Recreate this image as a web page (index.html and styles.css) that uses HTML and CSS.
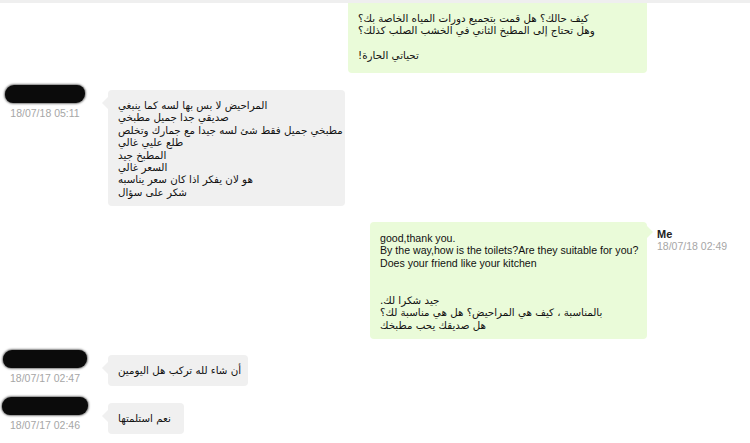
FILE: index.html
```html
<!DOCTYPE html>
<html lang="ar">
<head>
<meta charset="utf-8">
<link rel="stylesheet" href="styles.css">
</head>
<body>
<div class="strip"></div>
<div class="chat">
  <div class="row out first">
    <div class="bubble green b1">
      <div class="ar">كيف حالك؟ هل قمت بتجميع دورات المياه الخاصة بك؟</div>
      <div class="ar">وهل تحتاج إلى المطبخ الثاني في الخشب الصلب كذلك؟</div>
      <div class="blank"></div>
      <div class="ar">!تحياتي الحارة</div>
    </div>
    <div class="meta"></div>
  </div>

  <div class="row in r2">
    <div class="sender">
      <div class="blob w80"></div>
      <div class="time">18/07/18 05:11</div>
    </div>
    <div class="bubble grey tail-left b2">
      <div class="ar">المراحيض لا بس بها لسه كما ينبغي</div>
      <div class="ar">صديقي جدا جميل مطبخي</div>
      <div class="ar">مطبخي جميل فقط شئ لسه جيدا مع جمارك وتخلص</div>
      <div class="ar">طلع عليي غالي</div>
      <div class="ar">المطبخ جيد</div>
      <div class="ar">السعر غالي</div>
      <div class="ar">هو لان يفكر اذا كان سعر يناسبه</div>
      <div class="ar">شكر على سؤال</div>
    </div>
  </div>

  <div class="row out r3">
    <div class="bubble green tail-right b3">
      <div class="en">good,thank you.</div>
      <div class="en">By the way,how is the toilets?Are they suitable for you?</div>
      <div class="en">Does your friend like your kitchen</div>
      <div class="blank"></div>
      <div class="blank"></div>
      <div class="ar">.جيد شكرا لك</div>
      <div class="ar">بالمناسبة ، كيف هي المراحيض؟ هل هي مناسبة لك؟</div>
      <div class="ar">هل صديقك يحب مطبخك</div>
    </div>
    <div class="meta">
      <div class="me">Me</div>
      <div class="time">18/07/18 02:49</div>
    </div>
  </div>

  <div class="row in r4">
    <div class="sender">
      <div class="blob w84"></div>
      <div class="time">18/07/17 02:47</div>
    </div>
    <div class="bubble grey tail-left b4">
      <div class="ar">أن شاء لله تركب هل اليومين</div>
    </div>
  </div>

  <div class="row in r5">
    <div class="sender">
      <div class="blob w86"></div>
      <div class="time">18/07/17 02:46</div>
    </div>
    <div class="bubble grey tail-left b5">
      <div class="ar">نعم استلمتها</div>
    </div>
  </div>
</div>
</body>
</html>
```

FILE: styles.css
```css
* { box-sizing: border-box; }
html, body { margin: 0; padding: 0; background: #ffffff; }
body {
  width: 750px;
  height: 443px;
  overflow: hidden;
  font-family: "Liberation Sans", "DejaVu Sans", sans-serif;
  color: #1a1a1a;
  direction: ltr;
}
.strip { height: 3px; background: #efefef; }
.chat { display: flex; flex-direction: column; }
.row { display: flex; align-items: flex-start; }
.row.out { justify-content: flex-end; }
.r2 { margin-top: 12px; }
.r3 { margin-top: 16px; }
.r4 { margin-top: 11px; }
.r5 { margin-top: 11px; }

.bubble {
  position: relative;
  border-radius: 4px;
  padding: 9px 10px 8px 10px;
  line-height: 12.4px;
  white-space: nowrap;
}
.green { background: #eafbd9; }
.grey { background: #f0f0f0; }
.b1 { width: 299px; height: 70px; border-top-left-radius: 0; border-top-right-radius: 0; padding-top: 9px; }
.b2 { width: 237px; height: 116px; margin-top: 5px; }
.b3 { width: 277px; height: 117px; padding-top: 10px; }
.b4 { width: 140px; height: 31px; margin-top: 5px; padding-top: 9px; }
.b5 { width: 76px; height: 31px; margin-top: 6px; padding-top: 9px; }

.tail-left::before {
  content: "";
  position: absolute;
  left: -6px;
  top: 7px;
  border-style: solid;
  border-width: 6px 6px 6px 0;
  border-color: transparent #f0f0f0 transparent transparent;
}
.tail-right::after {
  content: "";
  position: absolute;
  right: -6px;
  top: 4px;
  border-style: solid;
  border-width: 6px 0 6px 6px;
  border-color: transparent transparent transparent #eafbd9;
}

.ar { font-family: "DejaVu Sans", sans-serif; font-size: 10.3px; height: 12.4px; color: #111; }
.en { font-size: 10.6px; height: 12.4px; color: #111; }
.blank { height: 12.4px; }

.meta { width: 103px; padding-left: 10px; padding-top: 6px; }
.me { font-size: 11px; font-weight: bold; color: #222; line-height: 12px; }
.time { font-size: 10.5px; color: #a6a6a6; line-height: 12px; }

.sender {
  width: 90px;
  margin-right: 18px;
  display: flex;
  flex-direction: column;
  align-items: center;
}
.sender .time { margin-top: 4px; }
.blob {
  height: 18px;
  background: #0b0b0b;
  border-radius: 9px 8px 9px 8px;
  box-shadow: 0 0 2px 1px rgba(40,40,40,0.6);
}
.w80 { width: 80px; }
.w84 { width: 84px; }
.w86 { width: 86px; }
```
